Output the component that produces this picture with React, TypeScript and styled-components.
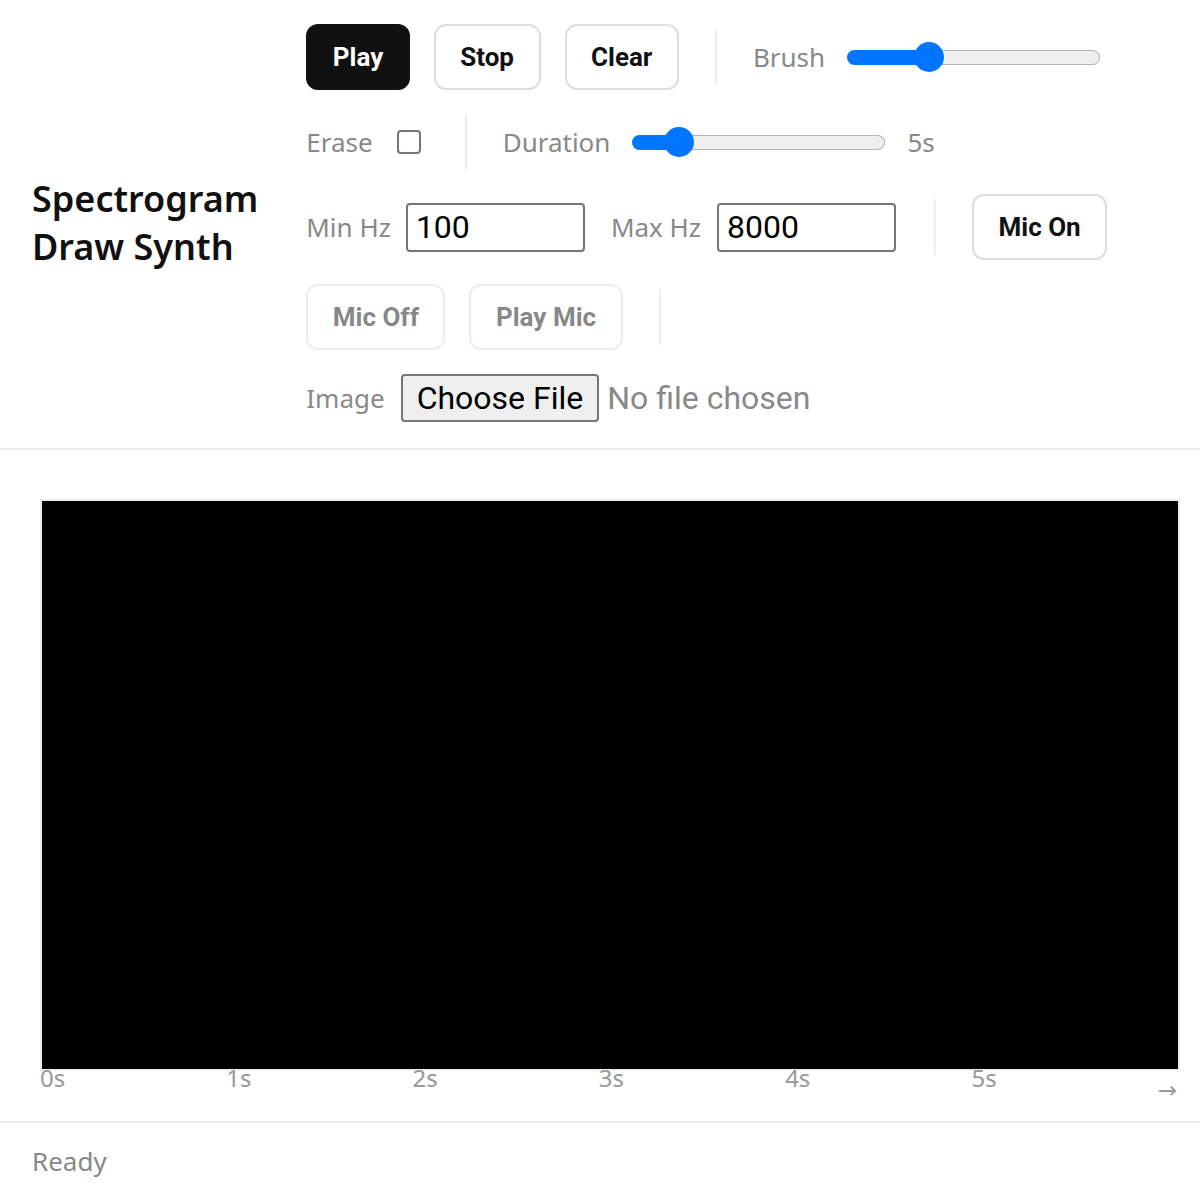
import React, { useState } from 'react';
import styled, { createGlobalStyle } from 'styled-components';

const GlobalStyle = createGlobalStyle`
  html, body { margin: 0; padding: 0; background: #fff; }
  body { font-family: "Noto Sans", "Open Sans", sans-serif; color: #111; }
  *, *::before, *::after { box-sizing: border-box; }
`;

const Page = styled.div`
  display: flex;
  flex-direction: column;
  width: 1200px;
`;

const Header = styled.header`
  display: flex;
  align-items: center;
  gap: 48px;
  padding: 24px 32px 26px;
  border-bottom: 2px solid #eee;
`;

const Title = styled.h1`
  flex: 0 0 226px;
  margin: 0;
  font-size: 36px;
  font-weight: 600;
  line-height: 48px;
  color: #111;
`;

const Controls = styled.div`
  flex: 1;
  display: flex;
  flex-wrap: wrap;
  align-items: center;
  column-gap: 24px;
  row-gap: 24px;
`;

const Button = styled.button<{ $primary?: boolean }>`
  height: 66px;
  padding: 0 24.5px;
  border-radius: 12px;
  font-family: Roboto, "Liberation Sans", sans-serif;
  font-weight: 700;
  font-size: 26px;
  border: 2px solid ${(p) => (p.$primary ? '#111' : '#ddd')};
  background: ${(p) => (p.$primary ? '#111' : '#fff')};
  color: ${(p) => (p.$primary ? '#fff' : '#111')};
  cursor: pointer;
  &:disabled {
    opacity: 0.5;
    cursor: default;
  }
`;

const Divider = styled.span`
  width: 2px;
  height: 56px;
  margin: 0 12px;
  background: #eee;
`;

const Field = styled.label<{ $gap: number }>`
  display: flex;
  align-items: center;
  gap: ${(p) => p.$gap}px;
  font-size: 26px;
  color: #888;
`;

const Range = styled.input`
  -webkit-appearance: none;
  appearance: none;
  width: 253px;
  height: 30px;
  margin: 0;
  background: transparent;
  &::-webkit-slider-runnable-track {
    height: 15px;
    border-radius: 8px;
    border: 1.5px solid transparent;
    background:
      linear-gradient(to right, #0075ff var(--fill), transparent var(--fill)) border-box,
      linear-gradient(#efefef, #efefef) padding-box,
      linear-gradient(#b3b3b3, #b3b3b3) border-box;
  }
  &::-webkit-slider-thumb {
    -webkit-appearance: none;
    appearance: none;
    width: 30px;
    height: 30px;
    margin-top: -9px;
    border: none;
    border-radius: 50%;
    background: #0075ff;
  }
`;

const Checkbox = styled.input`
  -webkit-appearance: none;
  appearance: none;
  width: 24px;
  height: 24px;
  margin: 0 8px 0 0;
  border: 2px solid #767676;
  border-radius: 4px;
  background: #fff;
`;

const NumberBox = styled.input`
  width: 179px;
  height: 49px;
  margin: 0 2px 0 0;
  padding: 0 8px;
  border: 2px solid #767676;
  border-radius: 4px;
  font-family: Roboto, "Liberation Sans", sans-serif;
  font-size: 32px;
  color: #000;
  outline: none;
`;

const FileInput = styled.input`
  font-family: Roboto, "Liberation Sans", sans-serif;
  font-size: 32px;
  color: #888;
  &::file-selector-button {
    height: 48px;
    margin: 0 8px 0 0;
    padding: 0 14px;
    font: inherit;
    color: #000;
    background: #efefef;
    border: 2px solid #767676;
    border-radius: 4px;
  }
`;

const Main = styled.main`
  display: flex;
  flex-direction: column;
  padding: 49px 20px 23px 40px;
`;

const Canvas = styled.div`
  height: 572px;
  background: #000;
  border: 2px solid #eee;
`;

const Axis = styled.div`
  display: flex;
  justify-content: space-between;
  align-items: flex-start;
  height: 32px;
  margin-top: -5px;
  padding-right: 3px;
  font-size: 24px;
  line-height: 24px;
  color: #999;
`;

const Tick = styled.span``;

const Arrow = styled.span`
  margin-top: 12px;
  font-family: "DejaVu Sans", sans-serif;
  font-size: 23px;
  line-height: 24px;
  color: #999;
`;

const Footer = styled.footer`
  padding: 20px 32px 24px;
  border-top: 2px solid #eee;
  font-size: 26px;
  color: #888;
`;

function fillFor(value: number, min: number, max: number) {
  const f = (value - min) / (max - min);
  const px = 15 + f * (253 - 30);
  return `${(px / 253) * 100}%`;
}

export default function App() {
  const [brush, setBrush] = useState(30);
  const [duration, setDuration] = useState(5);
  const [minHz, setMinHz] = useState('100');
  const [maxHz, setMaxHz] = useState('8000');

  return (
    <Page>
      <GlobalStyle />
      <Header>
        <Title>Spectrogram Draw Synth</Title>
        <Controls>
          <Button $primary>Play</Button>
          <Button>Stop</Button>
          <Button>Clear</Button>
          <Divider />
          <Field $gap={22}>
            <span>Brush</span>
            <Range
              type="range"
              min={0}
              max={100}
              value={brush}
              onChange={(e) => setBrush(Number(e.target.value))}
              style={{ ['--fill' as any]: fillFor(brush, 0, 100) }}
            />
          </Field>
          <Field $gap={24}>
            <span>Erase</span>
            <Checkbox type="checkbox" />
          </Field>
          <Divider />
          <Field $gap={22}>
            <span>Duration</span>
            <Range
              type="range"
              min={1}
              max={30}
              value={duration}
              onChange={(e) => setDuration(Number(e.target.value))}
              style={{ ['--fill' as any]: fillFor(duration, 1, 30) }}
            />
            <span>{duration}s</span>
          </Field>
          <Field $gap={15}>
            <span>Min Hz</span>
            <NumberBox value={minHz} onChange={(e) => setMinHz(e.target.value)} />
          </Field>
          <Field $gap={16}>
            <span>Max Hz</span>
            <NumberBox value={maxHz} onChange={(e) => setMaxHz(e.target.value)} />
          </Field>
          <Divider />
          <Button>Mic On</Button>
          <Button disabled>Mic Off</Button>
          <Button disabled>Play Mic</Button>
          <Divider />
          <Field $gap={16}>
            <span>Image</span>
            <FileInput type="file" accept="image/*" />
          </Field>
        </Controls>
      </Header>
      <Main>
        <Canvas />
        <Axis>
          {[0, 1, 2, 3, 4, 5].map((s) => (
            <Tick key={s}>{s}s</Tick>
          ))}
          <Arrow>→</Arrow>
        </Axis>
      </Main>
      <Footer>Ready</Footer>
    </Page>
  );
}
